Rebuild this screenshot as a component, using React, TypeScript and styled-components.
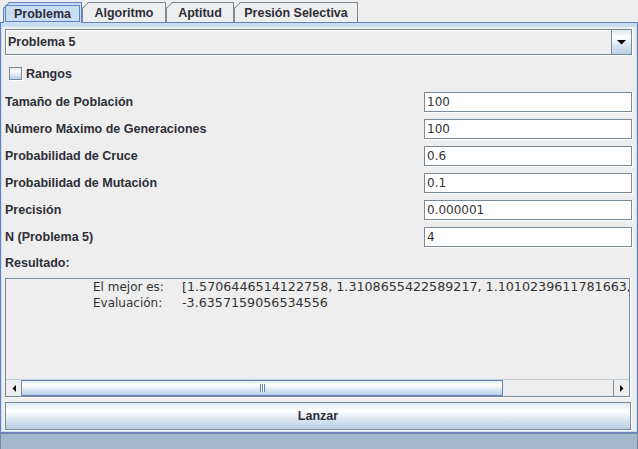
import React from "react";
import styled, { createGlobalStyle } from "styled-components";

const GRAD =
  "linear-gradient(to bottom, #dde8f3 0%, #ffffff 30%, #dde8f3 60%, #b8cfe5 100%)";

const Global = createGlobalStyle`
  html, body { margin: 0; padding: 0; background: #eeeeee; }
  body { font-family: "Liberation Sans", Arial, sans-serif; color: #2e2e38; }
  * { box-sizing: border-box; }
`;

const Frame = styled.div`
  width: 638px;
  height: 449px;
  display: flex;
  flex-direction: column;
  background: #eeeeee;
  overflow: hidden;
`;

const TabRow = styled.div`
  display: flex;
  align-items: flex-end;
  height: 22px;
  padding-left: 3px;
  position: relative;
  z-index: 1;
`;

const Tab = styled.div<{ $w: number; $sel?: boolean }>`
  position: relative;
  width: ${(p) => p.$w}px;
  height: ${(p) => (p.$sel ? 21 : 20)}px;
  margin-bottom: ${(p) => (p.$sel ? -1 : 0)}px;
  display: flex;
  align-items: center;
  justify-content: center;
  padding-bottom: ${(p) => (p.$sel ? 1 : 0)}px;
  background: ${(p) => (p.$sel ? "#c8ddf2" : "#eeeeee")};
  border: 1px solid ${(p) => (p.$sel ? "#6382bf" : "#7a8a99")};
  border-bottom: none;
  clip-path: polygon(6px 0, 100% 0, 100% 100%, 0 100%, 0 6px);
  font-weight: bold;
  font-size: 12.5px;
  &::before {
    content: "";
    position: absolute;
    left: -1px;
    top: 5px;
    width: 9px;
    height: 1px;
    background: ${(p) => (p.$sel ? "#6382bf" : "#7a8a99")};
    transform-origin: 0 0;
    transform: rotate(-45deg);
  }
`;

const TabLabel = styled.span<{ $focus?: boolean }>`
  display: flex;
  align-items: center;
  justify-content: center;
  align-self: stretch;
  flex: 1;
  margin: ${(p) => (p.$focus ? "2px 1px 0 1px" : "0")};
  border: 1px solid ${(p) => (p.$focus ? "#6382bf" : "transparent")};
`;

const ContentBorder = styled.div`
  height: 411px;
  border: 1px solid #6382bf;
  background: #c8ddf2;
  padding: 4px 1px 1px 1px;
`;

const Panel = styled.div`
  height: 404px;
  background: #eeeeee;
  padding: 2px 3px 1px 3px;
  display: flex;
  flex-direction: column;
`;

const Combo = styled.div`
  height: 26px;
  width: 627px;
  display: flex;
  border: 1px solid #7a8a99;
  box-shadow: inset 1px 1px 0 #ffffff, 1px 1px 0 #ffffff;
  background: #eeeeee;
`;

const ComboText = styled.div`
  flex: 1;
  display: flex;
  align-items: center;
  padding-left: 2px;
  font-weight: bold;
  font-size: 12.5px;
`;

const ComboButton = styled.div`
  width: 20px;
  display: flex;
  align-items: center;
  justify-content: center;
  border-left: 1px solid #7a8a99;
  background: ${GRAD};
`;

const CheckRow = styled.label`
  margin-top: 8px;
  height: 21px;
  display: flex;
  align-items: center;
  gap: 4px;
  padding-left: 4px;
  font-weight: bold;
  font-size: 12.5px;
`;

const CheckBox = styled.span`
  width: 13px;
  height: 13px;
  border: 1px solid #7a8a99;
  background: ${GRAD};
  box-shadow: 1px 1px 0 #ffffff;
`;

const Form = styled.div`
  margin-top: 8px;
  display: grid;
  grid-template-columns: 1fr 209px;
  grid-auto-rows: 20px;
  row-gap: 7px;
`;

const Label = styled.div`
  display: flex;
  align-items: center;
  font-weight: bold;
  font-size: 12.5px;
`;

const Field = styled.div`
  width: 208px;
  height: 20px;
  border: 1px solid #7a8a99;
  box-shadow: 1px 1px 0 #ffffff;
  background: #ffffff;
  padding-left: 2px;
  display: flex;
  align-items: center;
  font-family: "DejaVu Sans", sans-serif;
  font-size: 12px;
  color: #333333;
`;

const SectionTitle = styled.div`
  margin-top: 8px;
  height: 16px;
  line-height: 16px;
  font-weight: bold;
  font-size: 12.5px;
`;

const ScrollPane = styled.div`
  margin-top: 7px;
  height: 119px;
  width: 625px;
  border: 1px solid #7a8a99;
  box-shadow: 1px 1px 0 #ffffff;
  display: flex;
  flex-direction: column;
`;

const Viewport = styled.div`
  flex: 1;
  overflow: hidden;
  background: #eeeeee;
  padding-left: 87px;
  display: grid;
  grid-template-columns: 89px max-content;
  grid-auto-rows: 16px;
  align-content: start;
  line-height: 16px;
  white-space: nowrap;
  font-family: "DejaVu Sans", sans-serif;
  font-size: 12px;
  color: #333333;
`;

const Value = styled.span`
  font-size: 12.7px;
`;

const HScroll = styled.div`
  height: 17px;
  display: flex;
  background: #eeeeee;
  border-top: 1px solid #c4ccd4;
`;

const ArrowBtn = styled.div<{ $side: "left" | "right" }>`
  width: 16px;
  display: flex;
  align-items: center;
  justify-content: center;
  background: #eeeeee;
  ${(p) => (p.$side === "left" ? "border-right" : "border-left")}: 1px solid #7a8a99;
`;

const Track = styled.div`
  flex: 1;
  display: flex;
`;

const Thumb = styled.div<{ $w: number }>`
  width: ${(p) => p.$w}px;
  border: 1px solid #6382bf;
  border-left: none;
  background: ${GRAD};
  display: flex;
  align-items: center;
  justify-content: center;
`;

const Grip = styled.span`
  width: 5px;
  height: 8px;
  background: repeating-linear-gradient(
    to right,
    #6382bf 0 1px,
    #ffffff 1px 2px
  );
`;

const Button = styled.button`
  margin-top: 5px;
  height: 28px;
  width: 626px;
  border: 1px solid #7a8a99;
  box-shadow: 1px 1px 0 #ffffff;
  background: ${GRAD};
  font-family: "Liberation Sans", Arial, sans-serif;
  font-weight: bold;
  font-size: 12.5px;
  color: #2e2e38;
  padding: 0;
`;

const StatusBar = styled.div`
  height: 16px;
  background: #a3b8cc;
  border: 1px solid #7a8a99;
  border-bottom: none;
`;

const DownArrow = () => (
  <svg width="9" height="5" viewBox="0 0 9 5">
    <polygon points="0,0 9,0 4.5,4.5" fill="#000" />
  </svg>
);

const SideArrow = ({ dir }: { dir: "left" | "right" }) => (
  <svg width="4" height="7" viewBox="0 0 4 7">
    <polygon
      points={dir === "left" ? "4,0 4,7 0.5,3.5" : "0,0 0,7 3.5,3.5"}
      fill="#000"
    />
  </svg>
);

const tabs = [
  { label: "Problema", w: 79 },
  { label: "Algoritmo", w: 84 },
  { label: "Aptitud", w: 68 },
  { label: "Presión Selectiva", w: 124 },
];

const fields = [
  ["Tamaño de Población", "100"],
  ["Número Máximo de Generaciones", "100"],
  ["Probabilidad de Cruce", "0.6"],
  ["Probabilidad de Mutación", "0.1"],
  ["Precisión", "0.000001"],
  ["N (Problema 5)", "4"],
];

export default function App() {
  return (
    <Frame>
      <Global />
      <TabRow>
        {tabs.map((t, i) => (
          <Tab key={t.label} $w={t.w} $sel={i === 0}>
            <TabLabel $focus={i === 0}>{t.label}</TabLabel>
          </Tab>
        ))}
      </TabRow>
      <ContentBorder>
        <Panel>
          <Combo>
            <ComboText>Problema 5</ComboText>
            <ComboButton>
              <DownArrow />
            </ComboButton>
          </Combo>
          <CheckRow>
            <CheckBox />
            Rangos
          </CheckRow>
          <Form>
            {fields.map(([l, v]) => (
              <React.Fragment key={l}>
                <Label>{l}</Label>
                <Field>{v}</Field>
              </React.Fragment>
            ))}
          </Form>
          <SectionTitle>Resultado:</SectionTitle>
          <ScrollPane>
            <Viewport>
              <span>El mejor es:</span>
              <Value>[1.5706446514122758, 1.3108655422589217, 1.1010239611781663, 0.9542182731055466]</Value>
              <span>Evaluación:</span>
              <Value>-3.6357159056534556</Value>
            </Viewport>
            <HScroll>
              <ArrowBtn $side="left">
                <SideArrow dir="left" />
              </ArrowBtn>
              <Track>
                <Thumb $w={481}>
                  <Grip />
                </Thumb>
              </Track>
              <ArrowBtn $side="right">
                <SideArrow dir="right" />
              </ArrowBtn>
            </HScroll>
          </ScrollPane>
          <Button>Lanzar</Button>
        </Panel>
      </ContentBorder>
      <StatusBar />
    </Frame>
  );
}
